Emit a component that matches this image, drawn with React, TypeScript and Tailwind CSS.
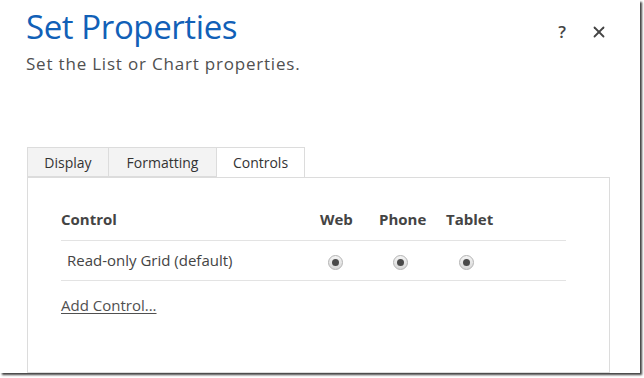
import { X } from "lucide-react";

const font = { fontFamily: '"Open Sans", "Noto Sans", sans-serif' };

const tabs = [
  { label: "Display", width: "w-[81px]" },
  { label: "Formatting", width: "w-[108px]" },
  { label: "Controls", width: "w-[89px]" },
];

function Radio() {
  return (
    <span className="inline-flex h-[15px] w-[15px] items-center justify-center rounded-full border border-[#b4b4b4] bg-gradient-to-b from-[#f4f4f4] to-[#d8d8d8]">
      <span className="h-[7px] w-[7px] rounded-full bg-[#4a4a4a]" />
    </span>
  );
}

export default function App() {
  const active = "Controls";

  return (
    <div className="h-[378px] w-[644px] overflow-hidden bg-white" style={font}>
      <div className="flex h-[373px] w-[640px] flex-col bg-white shadow-[2px_2px_2px_rgba(0,0,0,0.75)]">
        {/* Header */}
        <div className="flex items-start justify-between pl-[26px] pr-[32px] pt-[4px]">
          <div>
            <h1 className="text-[33px] font-normal leading-[46px] tracking-[-0.4px] text-[#1160b7]">
              Set Properties
            </h1>
            <p className="mt-[3px] text-[17px] leading-[22px] tracking-[0.8px] text-[#505050]">
              Set the List or Chart properties.
            </p>
          </div>
          <div className="mt-[15px] flex items-center gap-[24px] text-[#444]">
            <span className="text-[17px] font-semibold">?</span>
            <X size={18} strokeWidth={2.4} />
          </div>
        </div>

        {/* Tabs */}
        <div className="ml-[27px] mt-[72px] flex">
          {tabs.map((t) => (
            <div
              key={t.label}
              className={
                t.label === active
                  ? `relative z-10 -mb-px flex h-[30px] items-center justify-center border border-b-0 border-[#dcdcdc] bg-white text-[14px] text-[#333] ${t.width}`
                  : `flex h-[30px] items-center justify-center border border-r-0 border-[#dcdcdc] bg-[#f3f3f3] text-[14px] text-[#333] ${t.width}`
              }
            >
              {t.label}
            </div>
          ))}
        </div>

        {/* Panel */}
        <div className="ml-[27px] w-[583px] flex-1 border border-[#dcdcdc] pl-[33px] pr-[43px]">
          <div className="mt-[21px] flex h-[42px] items-center border-b border-[#e3e3e3] text-[15px] font-bold text-[#444]">
            <div className="w-[259px]">Control</div>
            <div className="w-[59px]">Web</div>
            <div className="w-[67px]">Phone</div>
            <div>Tablet</div>
          </div>
          <div className="flex h-[40px] items-center border-b border-[#e3e3e3] text-[15px] text-[#444]">
            <div className="w-[267px] pl-[6px]">Read-only Grid (default)</div>
            <div className="w-[65px]"><Radio /></div>
            <div className="w-[66px]"><Radio /></div>
            <div><Radio /></div>
          </div>
          <a className="mt-[13px] inline-block text-[15px] text-[#505050] underline underline-offset-2">
            Add Control...
          </a>
        </div>
      </div>
    </div>
  );
}
